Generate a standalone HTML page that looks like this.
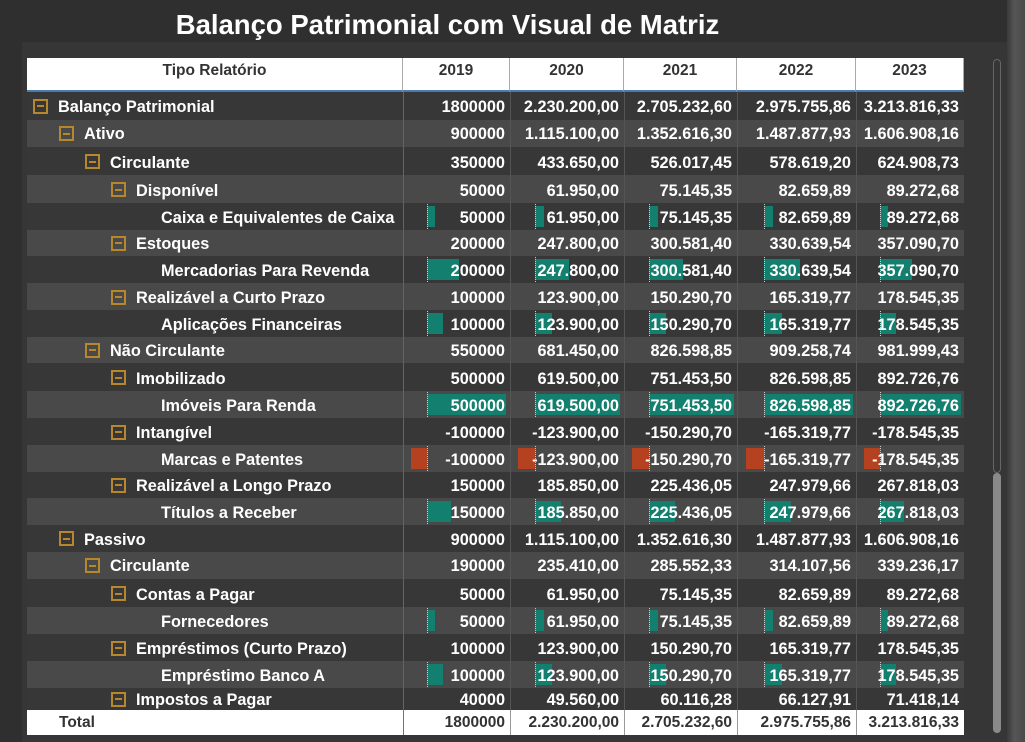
<!DOCTYPE html>
<html><head><meta charset="utf-8">
<style>
body{margin:0;width:1025px;height:742px;background:#2f2f2f;overflow:hidden;font-family:"Liberation Sans",Arial,sans-serif;position:relative}
#panel{position:absolute;left:22px;top:42px;width:985px;height:700px;background:#363636}
#right{position:absolute;left:1007px;top:0;width:18px;height:742px;background:linear-gradient(90deg,#3a3a3a,#555 40%,#4a4a4a)}
h1{position:absolute;left:0;width:895px;top:9px;margin:0;text-align:center;color:#fff;font-size:27.5px;font-weight:bold}
.c{position:absolute;box-sizing:border-box;white-space:nowrap;font-weight:bold;font-size:16.3px;color:#fff;overflow:visible}
.hd{background:#fff;color:#333;text-align:center;font-size:15.5px}
.v{text-align:right;padding-right:5px}
.ic{position:absolute;width:11px;height:11px;border:2px solid #b8862b;top:50%;margin-top:-7px}
.ic:after{content:"";position:absolute;left:2px;right:2px;top:4.5px;height:2px;background:#b8862b}
.bar{position:absolute}
.ax{position:absolute;width:0;border-left:1px dotted #ccc}
.t{position:relative;top:1.5px}
.lb{position:absolute;top:1.5px}
#sb{position:absolute;left:993px;top:59px;width:8px;height:414px;border:1px solid #666;border-radius:4px;box-sizing:border-box}
#sb2{position:absolute;left:993px;top:473px;width:8px;height:260px;background:#8a8a8a;border-radius:4px}
</style></head><body>
<div id="panel"></div><div id="right"></div>
<h1>Balanço Patrimonial com Visual de Matriz</h1>
<div id="sb"></div><div id="sb2"></div>
<div id="g"></div>
<script>
var cols=[27,403,510,624,737,856,964];
var axo=[23,24,24,26,23], mx=[500000,619500,751453.5,826598.85,892726.76], mw=[79,85,85,89,81];
var rows=[
["Balanço Patrimonial",0,1,["1800000","2.230.200,00","2.705.232,60","2.975.755,86","3.213.816,33"]],
["Ativo",1,1,["900000","1.115.100,00","1.352.616,30","1.487.877,93","1.606.908,16"]],
["Circulante",2,1,["350000","433.650,00","526.017,45","578.619,20","624.908,73"]],
["Disponível",3,1,["50000","61.950,00","75.145,35","82.659,89","89.272,68"]],
["Caixa e Equivalentes de Caixa",4,0,["50000","61.950,00","75.145,35","82.659,89","89.272,68"]],
["Estoques",3,1,["200000","247.800,00","300.581,40","330.639,54","357.090,70"]],
["Mercadorias Para Revenda",4,0,["200000","247.800,00","300.581,40","330.639,54","357.090,70"]],
["Realizável a Curto Prazo",3,1,["100000","123.900,00","150.290,70","165.319,77","178.545,35"]],
["Aplicações Financeiras",4,0,["100000","123.900,00","150.290,70","165.319,77","178.545,35"]],
["Não Circulante",2,1,["550000","681.450,00","826.598,85","909.258,74","981.999,43"]],
["Imobilizado",3,1,["500000","619.500,00","751.453,50","826.598,85","892.726,76"]],
["Imóveis Para Renda",4,0,["500000","619.500,00","751.453,50","826.598,85","892.726,76"]],
["Intangível",3,1,["-100000","-123.900,00","-150.290,70","-165.319,77","-178.545,35"]],
["Marcas e Patentes",4,0,["-100000","-123.900,00","-150.290,70","-165.319,77","-178.545,35"]],
["Realizável a Longo Prazo",3,1,["150000","185.850,00","225.436,05","247.979,66","267.818,03"]],
["Títulos a Receber",4,0,["150000","185.850,00","225.436,05","247.979,66","267.818,03"]],
["Passivo",1,1,["900000","1.115.100,00","1.352.616,30","1.487.877,93","1.606.908,16"]],
["Circulante",2,1,["190000","235.410,00","285.552,33","314.107,56","339.236,17"]],
["Contas a Pagar",3,1,["50000","61.950,00","75.145,35","82.659,89","89.272,68"]],
["Fornecedores",4,0,["50000","61.950,00","75.145,35","82.659,89","89.272,68"]],
["Empréstimos (Curto Prazo)",3,1,["100000","123.900,00","150.290,70","165.319,77","178.545,35"]],
["Empréstimo Banco A",4,0,["100000","123.900,00","150.290,70","165.319,77","178.545,35"]],
["Impostos a Pagar",3,1,["40000","49.560,00","60.116,28","66.127,91","71.418,14"]]
];
var hs=[27.5,27.5,28,28,26.5,26.5,27,27,26.5,26.5,28,27,27,26.5,26.5,27,26.5,27.5,28,27,27,26.5,22.5];
function num(s){return parseFloat(s.replace(/\./g,'').replace(',','.'));}
var h='';
var hdr=["Tipo Relatório","2019","2020","2021","2022","2023"];
for(var i=0;i<6;i++){h+='<div class="c hd" style="left:'+cols[i]+'px;top:58px;width:'+(cols[i+1]-cols[i])+'px;height:34px;line-height:26px;border-right:1px solid #aaa;border-bottom:2px solid #4a7ab0">'+hdr[i]+'</div>';}
var y=92;
rows.forEach(function(r,k){
 var ht=hs[k],bg=k%2?'#494949':'#373737';
 h+='<div class="c" style="left:27px;top:'+y+'px;width:937px;height:'+ht+'px;background:'+bg+'"></div>';
 var ind=r[1]*26;
 if(r[2]){h+='<div class="c" style="left:27px;top:'+y+'px;width:376px;height:'+ht+'px;line-height:'+ht+'px"><div class="ic" style="left:'+(6+ind)+'px"></div><span class="lb" style="left:'+(31+ind)+'px">'+r[0]+'</span></div>';}
 else{h+='<div class="c" style="left:27px;top:'+y+'px;width:376px;height:'+ht+'px;line-height:'+ht+'px"><span class="lb" style="left:134px">'+r[0]+'</span></div>';}
 for(var j=0;j<5;j++){
  var L=cols[j+1],W=cols[j+2]-cols[j+1];
  var inner='';
  if(!r[2]){var v=num(r[3][j]);var bw=Math.abs(v)/mx[j]*mw[j];var ax=axo[j];
   if(v>=0)inner+='<div class="bar" style="left:'+ax+'px;top:3px;height:'+(ht-6)+'px;width:'+bw+'px;background:#137f6e"></div>';
   else inner+='<div class="bar" style="left:'+(ax-bw)+'px;top:3px;height:'+(ht-6)+'px;width:'+bw+'px;background:#b4411f"></div>';
   inner+='<div class="ax" style="left:'+ax+'px;top:1px;height:'+(ht-2)+'px"></div>';}
  h+='<div class="c v" style="left:'+L+'px;top:'+y+'px;width:'+W+'px;height:'+ht+'px;line-height:'+ht+'px;border-left:1px solid '+(j==0?'#4a6a8a':'#555')+'">'+inner+'<span class="t">'+r[3][j]+'</span></div>';
 }
 y+=ht;
});
var tot=["Total","1800000","2.230.200,00","2.705.232,60","2.975.755,86","3.213.816,33"];
for(var i=0;i<6;i++){h+='<div class="c '+(i?'v':'')+'" style="left:'+cols[i]+'px;top:710px;width:'+(cols[i+1]-cols[i])+'px;height:25px;line-height:25px;background:#fff;color:#333;font-size:15.5px;'+(i?'border-left:1px solid '+(i==1?'#4a7ab0':'#999')+';':'padding-left:32px;')+'">'+tot[i]+'</div>';}
document.getElementById('g').innerHTML=h;
</script>
</body></html>
